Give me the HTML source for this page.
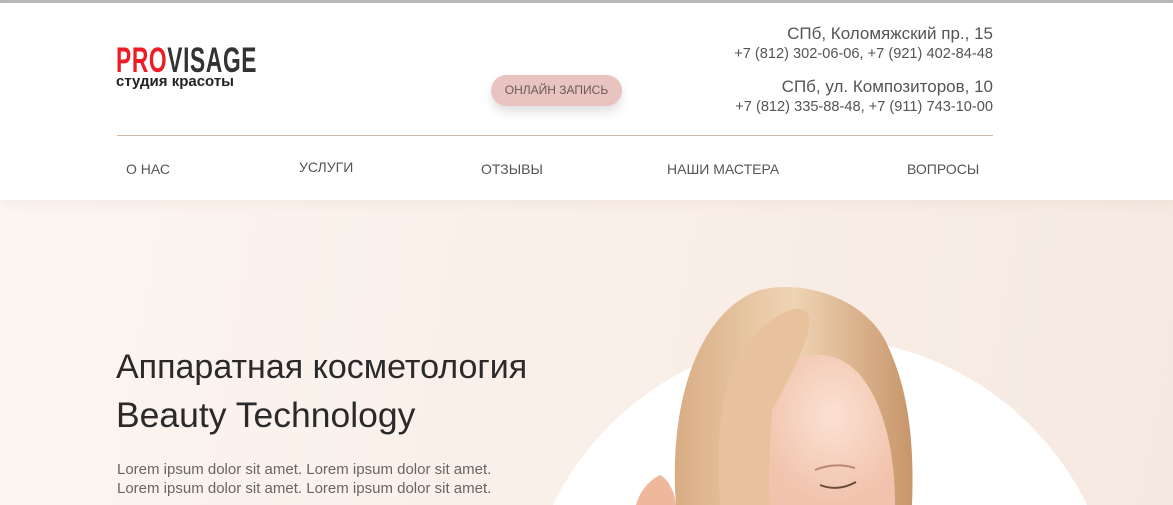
<!DOCTYPE html>
<html><head><meta charset="utf-8"><style>
*{margin:0;padding:0;box-sizing:border-box}
html,body{width:1173px;height:505px;overflow:hidden}
body{font-family:"Liberation Sans",sans-serif;background:#fff;position:relative;color:#333}
.top{position:absolute;left:0;top:0;width:1173px;height:3px;background:#b8b8b8}
header{position:absolute;left:0;top:3px;width:1173px;height:197px;background:#fff;z-index:2;box-shadow:0 4px 10px rgba(200,180,170,.15)}
.logo{position:absolute;left:116px;top:42px}
.logo .b{font-family:"Liberation Sans Narrow","Liberation Sans",sans-serif;font-weight:bold;font-size:35px;letter-spacing:1px;line-height:32px;transform:scaleX(.65);transform-origin:left;display:block;white-space:nowrap}
.logo .b span{color:#ee1c24}
.logo .s{font-weight:bold;font-size:15px;color:#222;line-height:14px;display:block;margin-top:-2px}
.btn{position:absolute;left:491px;top:72px;width:131px;height:31px;border-radius:16px;background:#e9c3c0;font-size:12px;color:#6a5a5a;text-align:center;line-height:31px;box-shadow:0 6px 10px rgba(0,0,0,.12)}
.ad{position:absolute;right:180px;text-align:right;color:#555;white-space:nowrap}
.ad .a{font-size:17px;color:#555}
.ad .p{font-size:14.6px;color:#555}
.line{position:absolute;left:117px;top:132px;width:876px;height:1px;background:#cdb8a8}
nav a{position:absolute;top:158px;font-size:14px;color:#555;text-decoration:none}
.hero{position:absolute;left:0;top:200px;width:1173px;height:305px;overflow:hidden;background:linear-gradient(100deg,#fcf5f1 0%,#f9eee7 60%,#f5e9e1 100%)}
h1{position:absolute;left:116px;font-weight:normal;color:#2a2a2a;white-space:nowrap}
.lo{position:absolute;left:117px;top:460px;font-size:15px;color:#666;line-height:19px;white-space:nowrap}
</style></head><body>
<div class="top"></div>
<div class="hero">
<svg style="position:absolute;left:0;top:0;display:block" width="1173" height="305">
<defs>
<linearGradient id="h" x1="0" y1="0" x2="1" y2="0"><stop offset="0" stop-color="#d9ad84"/><stop offset=".5" stop-color="#efd4b4"/><stop offset="1" stop-color="#c8956a"/></linearGradient>
<radialGradient id="f" cx=".5" cy=".4" r=".6"><stop offset="0" stop-color="#fbe1d3"/><stop offset="1" stop-color="#f1c3ac"/></radialGradient>
</defs>
<circle cx="820" cy="435" r="297" fill="#fff"/>
<path d="M676 305 C668 200 700 110 760 90 C800 80 860 95 885 140 C905 180 915 230 912 305 Z" fill="url(#h)"/>
<path d="M770 305 L770 210 C775 150 830 140 860 175 C885 205 895 255 895 305 Z" fill="url(#f)"/>
<path d="M720 305 C715 220 720 140 790 110 C830 100 800 160 772 210 C770 240 768 280 770 305 Z" fill="#e7c29c"/>
<path d="M820 285 Q838 292 856 282" stroke="#6a4a3a" stroke-width="2" fill="none"/>
<path d="M815 270 Q835 262 855 268" stroke="#b88a72" stroke-width="2" fill="none"/>
<path d="M636 305 C640 290 650 280 660 275 C670 280 675 295 676 305Z" fill="#efb89c"/>
</svg>
</div>
<header>
<div class="logo"><span class="b"><span>PRO</span>VISAGE</span><span class="s">студия красоты</span></div>
<div class="btn">ОНЛАЙН ЗАПИСЬ</div>
<div class="ad" style="top:21px"><div class="a">СПб, Коломяжский пр., 15</div><div class="p" style="margin-top:2px">+7 (812) 302-06-06, +7 (921) 402-84-48</div></div>
<div class="ad" style="top:74px"><div class="a">СПб, ул. Композиторов, 10</div><div class="p" style="margin-top:2px">+7 (812) 335-88-48, +7 (911) 743-10-00</div></div>
<div class="line"></div>
<nav><a style="left:126px">О НАС</a><a style="left:299px;top:156px">УСЛУГИ</a><a style="left:481px">ОТЗЫВЫ</a><a style="left:667px">НАШИ МАСТЕРА</a><a style="left:907px">ВОПРОСЫ</a></nav>
</header>
<h1 style="top:348px;font-size:34px">Аппаратная косметология</h1>
<h1 style="top:395px;font-size:35.5px">Beauty Technology</h1>
<div class="lo">Lorem ipsum dolor sit amet. Lorem ipsum dolor sit amet.<br>Lorem ipsum dolor sit amet. Lorem ipsum dolor sit amet.</div>
</body></html>
